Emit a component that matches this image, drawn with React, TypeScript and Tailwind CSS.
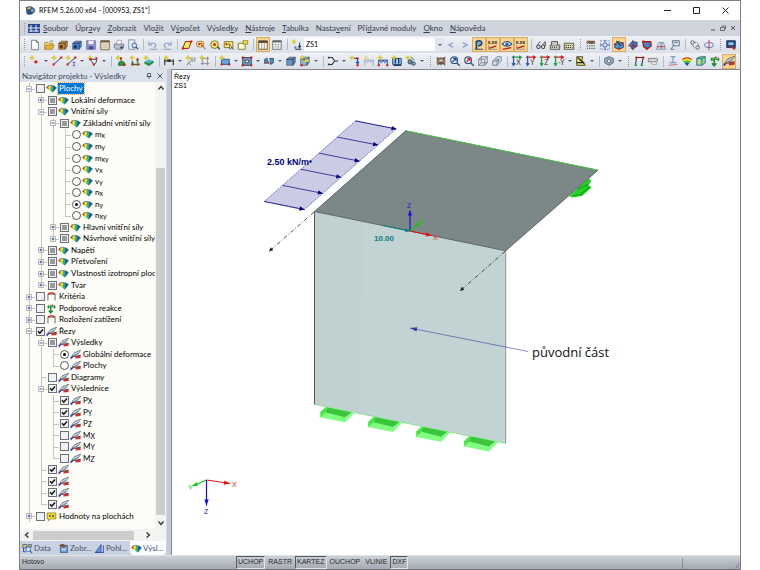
import { useEffect, useRef, type ReactNode } from "react";

const spark = <path d="M3.5 .5l.8 1.9 2 .8-2 .8-.8 2-.8-2-2-.8 2-.8z" fill="#f3e21c" stroke="#b9a400" strokeWidth=".5" />;
const box = (c: string, d: string) => (
  <>
    <path d="M2 5l3-2.500h7v6L9.500 12H2z" fill={c} stroke="#333" strokeWidth=".6" />
    <path d="M2 5h7.500v7M9.500 5L12 2.500" fill="none" stroke={d} strokeWidth="1" />
  </>
);
const node = (x: number, y: number) => <rect x={x - 1.2} y={y - 1.2} width="2.4" height="2.4" fill="#d81414" />;
const axis = (letter: string, a: string, b: string) => (
  <>
    <path d="M1 2.500h11M9.500 .8L12 2.500 9.500 4.200" stroke={a} strokeWidth="1.500" fill="none" />
    <path d="M3 1v11M1.200 9.500L3 12l1.800-2.500" stroke={b} strokeWidth="1.500" fill="none" />
    <text x="6" y="12" fontSize="8" fill="#333">{letter}</text>
  </>
);
const lens = (c: string) => (
  <>
    <circle cx="6" cy="6" r="4" fill="#dcebfa" stroke="#35507f" strokeWidth="1.200" />
    <path d="M9 9l3.500 3.500" stroke="#35507f" strokeWidth="1.800" />
    <path d="M4 8l4-4M5 4h3.200v3" stroke={c} strokeWidth="1.400" fill="none" />
  </>
);
const frame = (c: string) => (
  <path d="M2 12V6l3 3 2-3 2 3 3-3v6M2 6h10" fill="none" stroke={c} strokeWidth="1.100" />
);

const icons: Record<string, ReactNode> = {
  fresh: <path d="M3 1.500h5.500L11 4v8.500H3zM8.500 1.500V4H11" fill="#fff" stroke="#555" strokeWidth=".8" />,
  open: (
    <>
      <path d="M2 12V4h4l1 1h4v2" fill="#f6dd7c" stroke="#9a7410" strokeWidth=".8" />
      <path d="M2 12l2-5h9l-2 5z" fill="#e5b637" stroke="#9a7410" strokeWidth=".8" />
      <path d="M8 3q2-2 4 0" fill="none" stroke="#456" strokeWidth=".8" />
    </>
  ),
  brown: <>{box("#c58a3c", "#5f3a0c")}<circle cx="5" cy="9" r="2" fill="#553209" /></>,
  blue: <>{box("#4b83cf", "#173a78")}<circle cx="5" cy="9" r="2" fill="#12336d" /></>,
  save: (
    <>
      <path d="M2 2h10v10H2z" fill="#8b90d8" stroke="#555a9c" strokeWidth=".8" />
      <path d="M4 2h6v4H4z" fill="#eef" /><path d="M4.500 8.500h5V12h-5z" fill="#444a80" />
    </>
  ),
  panel: <><path d="M2 2h10v10.500H2z" fill="#e9e2cd" stroke="#6b5940" /><path d="M2 3h10" stroke="#6b5940" strokeWidth="2" /><path d="M4 6h6M4 8h6M4 10h6" stroke="#bbb29b" strokeWidth=".8" /></>,
  print: <><path d="M4 6L5 1.500h5L9.500 6" fill="#fff" stroke="#778" strokeWidth=".7" /><path d="M1.500 6h11v4l-2 2h-7l-2-2z" fill="#b6bfd0" stroke="#56607a" strokeWidth=".8" /><circle cx="10" cy="10" r="1.500" fill="#444" /></>,
  preview: <><path d="M2 1h7v11H2z" fill="#e8f0fa" stroke="#5d7290" strokeWidth=".8" /><circle cx="8.500" cy="7.500" r="2.800" fill="#cfe2f6" stroke="#35507f" /><path d="M10.500 9.500L13 12" stroke="#35507f" strokeWidth="1.500" /></>,
  undo: <path d="M2 3v4h4M2 7q4-4 8-1 1 3-2 4M3 12h9" fill="none" stroke="#8ba0c0" strokeWidth="1.200" />,
  redo: <path d="M12 3v4H8M12 7Q8 3 4 6q-1 3 2 4M3 12h9" fill="none" stroke="#8ba0c0" strokeWidth="1.200" />,
  plane: <><path d="M2 11L5 3h7L9 11z" fill="#f7ee58" stroke="#a01010" strokeWidth="1.100" />{node(2, 11)}{node(12, 3)}</>,
  ring: <><ellipse cx="6" cy="6" rx="4.500" ry="3.500" fill="#fff7a0" stroke="#9a6a14" /><path d="M8 7l4 5M5 5h3v3" stroke="#b51515" fill="none" />{node(5, 6)}</>,
  target: <><circle cx="6.500" cy="6.500" r="4.500" fill="#f8ef74" stroke="#6b6112" /><circle cx="6.500" cy="6.500" r="1.800" fill="#d22" /><path d="M10 9l2.500 3" stroke="#333" strokeWidth="1.400" /></>,
  note: <><path d="M1.500 3h10v7h-10z" fill="#f6ef6a" stroke="#77701a" /><path d="M7 5l1 7 1.500-2 2.500 2z" fill="#fff" stroke="#222" strokeWidth=".7" />{node(4, 6)}</>,
  sheet: <><path d="M1.500 5h8v7h-8z" fill="#fffbd0" stroke="#77701a" /><path d="M7 2h5.500v4H7z" fill="#f1e13c" stroke="#77701a" strokeWidth=".8" /></>,
  tableA: <><path d="M2 2h10v10H2z" fill="#fff" stroke="#5a4a33" /><path d="M2 3.500h10" stroke="#5a4a33" strokeWidth="2.400" /><path d="M5.500 4v8M8.500 4v8" stroke="#998a70" /></>,
  tableB: <><path d="M2 2h10v10H2z" fill="#fff" stroke="#666" /><path d="M2 3h10" stroke="#666" strokeWidth="2" /><path d="M2 6.500h10M2 9.300h10M5.500 4v8M8.500 4v8" stroke="#a9a9a9" strokeWidth=".8" /></>,
  load: <>{spark}<path d="M5 12h7M10 4v6M8.500 8L10 10.500 11.500 8" fill="none" stroke="#30405f" strokeWidth="1.200" /><circle cx="5" cy="10" r="1.500" fill="#73849d" /></>,
  prev: <path d="M9.500 4.500L4.500 7l5 2.500" fill="none" stroke="#7f97c9" strokeWidth="1.300" />,
  next: <path d="M4.500 4.500L9.500 7l-5 2.500" fill="none" stroke="#7f97c9" strokeWidth="1.300" />,
  results: <><path d="M4 12V3q5-2 6 1t-4 4" fill="none" stroke="#143d77" strokeWidth="2" /><circle cx="7" cy="5" r="2" fill="#6aaad9" /><path d="M2 12h10" stroke="#143d77" /></>,
  values: <><text x="1" y="6" fontSize="6" fontWeight="bold" fill="#222">x.xx</text><path d="M2 11l9-3" stroke="#c81616" strokeWidth="1.500" /><path d="M2 7v5h10" stroke="#888" fill="none" /></>,
  eye: <><path d="M1.500 6q5.500-6 11 0-5.500 5-11 0z" fill="#fff" stroke="#123b7c" strokeWidth="1.200" /><circle cx="7" cy="6" r="2" fill="#1c62bb" /><path d="M2 12l10-2" stroke="#c81616" strokeWidth="1.500" /></>,
  glasses: <><circle cx="4" cy="9" r="2" fill="none" stroke="#444" strokeWidth="1.200" /><circle cx="9.500" cy="9" r="2" fill="none" stroke="#444" strokeWidth="1.200" /><path d="M3 7l3-4M9 7l3-4M12 3v5" stroke="#444" /></>,
  calc: <><path d="M1.500 7h11v5h-11z" fill="#dedfcf" stroke="#444" /><path d="M3 7V3h7v4" fill="#c9cdb4" stroke="#444" /><path d="M3 9.500h8" stroke="#333" strokeDasharray="1.500 1" strokeWidth="1.400" /></>,
  calc2: <><path d="M1.500 5h11v7h-11z" fill="#e6e4ac" stroke="#444" /><path d="M3 7.500h8M3 10h8" stroke="#333" strokeDasharray="1.500 1" strokeWidth="1.200" /></>,
  shade: <><path d="M2 5h10M2 8h10M2 11h10" stroke="#666" strokeDasharray="1.500 1.200" strokeWidth="1.400" /><path d="M2 2h9l1 2-4 2-6-2z" fill="#7a5b43" /></>,
  snap: <><path d="M2 2h10v10H2z" fill="none" stroke="#6276b4" strokeDasharray="1.500 1.500" /><circle cx="7" cy="7" r="2.500" fill="#dbe4ff" stroke="#3752a8" /><path d="M7 1v3M7 10v3M1 7h3M10 7h3" stroke="#3752a8" /></>,
  solidA: <><path d="M2 6l4-3 6 2v5l-5 2-5-2z" fill="#3e9be0" stroke="#12406f" />{node(3, 6)}{node(11, 5)}{node(7, 11)}<path d="M4 2l5 6" stroke="#123" strokeWidth="1.200" /></>,
  solidB: <><path d="M3 6l3-3 6 1-1 5-5 3z" fill="#3e84d0" stroke="#12406f" /><path d="M7 1v12M1 8h12" stroke="#b41717" /></>,
  solidC: <><path d="M2 3h9l1 5-5 4-4-3z" fill="#3e84d0" stroke="#a31717" strokeWidth="1.400" />{node(3, 3)}{node(11, 4)}{node(7, 11)}</>,
  mirror: <><path d="M2 12L4 4h3v8zM12 12L10 4H8v8z" fill="#d8dfea" stroke="#6b7890" strokeWidth=".8" /><path d="M2 9h10" stroke="#b03333" /></>,
  view: <><path d="M4 2h8v6H5z" fill="#dfe4ee" stroke="#53627e" /><path d="M6 4h4M2 12l4-5M2 12h4" stroke="#53627e" fill="none" /></>,
  link: <><circle cx="4" cy="4" r="2" fill="none" stroke="#555" /><circle cx="10" cy="10" r="2" fill="none" stroke="#555" /><path d="M6 4q5-1 5 4M3 6l4 5" fill="none" stroke="#555" strokeDasharray="2 1" /></>,
  orbit: <><ellipse cx="7" cy="7" rx="5" ry="3" fill="none" stroke="#7088ca" strokeWidth="1.200" /><path d="M7 1v12" stroke="#cc2222" /></>,
  monitor: <><path d="M2 2h10v8H2z" fill="#274d84" stroke="#172e54" /><path d="M4 4h6v3H4z" fill="#9fc4ee" /><path d="M7 9l5 3" stroke="#c22" strokeWidth="1.800" /></>,
  point: <>{spark}<circle cx="8" cy="8" r="2" fill="#e11616" /></>,
  line: <>{spark}<path d="M3 11l9-8" stroke="#222" />{node(3, 11)}{node(12, 3)}</>,
  line2: <>{spark}<path d="M3 11l9-8" stroke="#222" /><path d="M9 8.500h3M10.500 8.500v4M9 12.500h3" stroke="#2b62b5" />{node(3, 11)}{node(12, 3)}</>,
  poly: <>{spark}<path d="M3 5h8v3l-3 4-2-4z" fill="none" stroke="#333" />{node(4, 5)}{node(11, 4)}{node(8, 11)}</>,
  support: <>{spark}<path d="M7 4v4M5 8h5l2 4H4z" fill="#26a543" stroke="#145d22" />{node(7, 4)}{node(11, 11)}</>,
  hinge: <>{spark}<path d="M3 11h9M4 7v4M10 5v4" stroke="#1a8a32" strokeWidth="1.800" />{node(4, 11)}{node(11, 11)}{node(10, 5)}</>,
  foundation: <>{spark}<path d="M2 8l5-3 5 2-5 3z" fill="#53b7d6" /><path d="M2 8l5 2 5-3v2l-5 3.500L2 10z" fill="#1b9d3a" stroke="#126626" strokeWidth=".5" /></>,
  dim: <>{spark}<path d="M2 12V5M12 12V5M2 7h10" stroke="#222" strokeWidth="1.200" /><path d="M5 5h4v3H5z" fill="#333" /></>,
  text: <>{spark}<path d="M2 12l4-5h6M4 9l3 3" fill="none" stroke="#777" /><text x="6" y="6" fontSize="5" fill="#444">0.5</text></>,
  grid: <><path d="M4 2v10M10 2v10M2 4h10M2 10h10" stroke="#888" />{spark}</>,
  surface: <><path d="M3 5h9v6H3z" fill="#6ba1dc" stroke="#274d84" />{spark}{node(12, 11)}{node(3, 11)}</>,
  hole: <><path d="M2 3h10v9H2z" fill="#6ba1dc" stroke="#333" /><path d="M5 6h4v3H5z" fill="#fff" stroke="#333" />{node(2, 3)}{node(12, 3)}{node(12, 12)}{node(2, 12)}</>,
  columns: <><path d="M2 5l3-1v5l-3 1zM8 4h4v5l-3 2z" fill="#4d9bcf" stroke="#174a6b" />{node(6, 9)}</>,
  solid: box("#6c94c3", "#17304f"),
  solidNew: <>{box("#8fb8c9", "#17304f")}{spark}<path d="M7 5h4v3H7z" fill="#e2d52c" />{node(3, 12)}</>,
  branch: <><path d="M2 3h4l3 4-3 4H2M9 7h4" fill="none" stroke="#333" strokeWidth="1.200" /><path d="M1 2h2v2H1zM1 10h2v2H1z" fill="#246" /></>,
  nodeLoad: <>{spark}<path d="M6 4h4v5M8.500 8l1.500 3 1.500-3" fill="none" stroke="#1c4fae" strokeWidth="1.300" />{node(10, 4)}{node(10, 12)}</>,
  lineLoadOff: <g opacity=".5">{frame("#5567aa")}{spark}</g>,
  lineLoad: <>{frame("#233f94")}{spark}{node(2, 12)}{node(12, 12)}</>,
  areaLoad: <><path d="M2 4h10v7H2z" fill="#9ec3e8" stroke="#123a6e" /><path d="M5 4v6M9 4v6M3 12h9" stroke="#123a6e" strokeWidth="1.500" />{spark}</>,
  freeLoad: <>{spark}<circle cx="6" cy="8" r="2.500" fill="#6a8cae" stroke="#234" /><circle cx="10" cy="10" r="2" fill="#8fb4d5" stroke="#234" /><path d="M7 2l4 4" stroke="#246" /></>,
  clip: <><path d="M2 3h10v8H2z" fill="#8a7763" /><path d="M2 3l10 9M12 2L3 12M7 3v9" stroke="#3d3027" /><path d="M5 5h4v3H5z" fill="#d6c6ae" /></>,
  zoomAll: lens("#17479f"),
  zoomBox: lens("#d41c1c"),
  cube: <path d="M2 5h7v7H2zM2 5l3-3h7v7l-3 3M9 5l3-3M5 2v7h7M5 9l-3 3" fill="none" stroke="#65708a" strokeWidth=".9" />,
  cubes: <path d="M2 7h5v5H2zM2 7l2-2h5v5l-2 2M5 4l2-2h5v5l-2 2M7 7l2-2" fill="#d5deee" stroke="#65708a" strokeWidth=".9" />,
  axX: axis("X", "#1fa43b", "#2e59b8"),
  axY: axis("Y", "#d41c1c", "#2e59b8"),
  axZ: axis("Z", "#d41c1c", "#1fa43b"),
  axMinus: axis("-Y", "#d41c1c", "#1fa43b"),
  plan: <><path d="M2 2h7l-1 5 4 5H2z" fill="#f2e948" stroke="#333" /><path d="M3 3l8 7M2 9h7" stroke="#222" strokeWidth="1.500" /></>,
  hex: <><path d="M2 4l5-2 5 2v5l-5 3-5-3z" fill="#a9b9cc" stroke="#43556d" /><circle cx="7" cy="7" r="2.300" fill="#dfe8f2" stroke="#43556d" /></>,
  portal: <><path d="M3 12L4 3h8l-2 9" fill="none" stroke="#333" strokeWidth="1.200" />{node(4, 3)}{node(12, 3)}<path d="M2 12h2.500M9 12h2.500" stroke="#1b9d3a" strokeWidth="1.500" /></>,
  tag: <><path d="M1.500 4h10l1 2-1 2h-10z" fill="#d5d5d5" stroke="#777" /><path d="M5 8h6v3H6z" fill="#eee" stroke="#888" strokeWidth=".7" /></>,
  member: <><path d="M4 2h6M7 2v7M3 9h8" stroke="#7286bd" strokeWidth="1.200" /><path d="M2 12l10-1" stroke="#c66" /></>,
  // colour bands of a result patch, red on the left rim to blue on the right
  fan: (
    <>
      <path d="M.5 6Q2 3 6 3q4.500-.2 7.500 3.200L8.500 12Q5 9 .5 6z" fill="#2fc24c" />
      <path d="M.5 6Q1.500 3.500 4 3.100L3.500 8.200Q2 7 .5 6z" fill="#ea3f22" />
      <path d="M3.500 3.300Q5 2.800 6.500 3L6 6.500l-.5 3.200-2-1.500L3 5.500z" fill="#f7e320" />
      <path d="M9 3.500q2.500 .7 4.500 2.700L8.500 12z" fill="#2256d2" />
      <path d="M.5 6Q2 3 6 3q4.500-.2 7.500 3.200" fill="none" stroke="#2a52a8" strokeWidth=".6" />
    </>
  ),
  fanBar: (
    <>
      <path d="M1 5q6-5 12 0L7 12.500z" fill="#c81414" />
      <path d="M1.500 5.500q5.500-3.500 11 0L7 12.500z" fill="#f8dd16" />
      <path d="M3 7.500q4-2.200 8 0l-4 5z" fill="#2cc846" />
      <path d="M4.500 9.500q2.500-1.200 5 0l-2.500 3z" fill="#1647d1" />
    </>
  ),
  iso: <><path d="M2 4l4-2h6v7l-4 3H2z" fill="#86d3c0" stroke="#2c7161" /><path d="M2 4h6l4-2M8 4v8" stroke="#2c7161" fill="none" /><circle cx="5" cy="8" r="1.800" fill="#f5d83a" /></>,
  reaction: (
    <>
      <path d="M6 12V3M3.500 9.500L6 12.500l2.500-3" fill="none" stroke="#178e2b" strokeWidth="1.800" />
      <path d="M2 5h10M2 5l2-2M2 5l2 2M12 5l-2-2M12 5l-2 2" stroke="#178e2b" strokeWidth="1.300" />
      <circle cx="8" cy="3" r="1.200" fill="#a33" />
    </>
  ),
  section: (
    <>
      <path d="M7 9.500L13.500 8v3.500L7 12.200z" fill="#dd2a2a" />
      <path d="M2 9.800L8 9l5.500-1.200" stroke="#3a3030" strokeWidth="1.100" fill="none" />
      <path d="M2.500 8.500L6 4.500 13.500 1.500 10 6.500 5 8.800z" fill="#9fb0c8" stroke="#3c485b" strokeWidth=".8" />
      <path d="M4 7.500l8-4.500" stroke="#e9eef5" strokeWidth=".9" />
      <path d="M.5 9.500l3.500 1-3 2.800z" fill="#1b30c8" />
    </>
  ),
  frameRed: <><path d="M2.500 12V4h9v8" fill="none" stroke="#555" strokeWidth="1.100" /><path d="M2.500 4q4.500-3 9 0" fill="none" stroke="#d02020" strokeWidth="1.600" /></>,
  comment: <><path d="M1.500 2.500h11v7.500H6l-3 2.500V10H1.500z" fill="#efe03c" stroke="#8a7d12" /><path d="M4 5l2 2.500M6 5L4 7.500M8 5l2 2.500M10 5L8 7.500" stroke="#333" strokeWidth=".9" /></>,
  data: <><path d="M1 2h5v4H1zM8 2h4v3H8z" fill="#f4c64b" stroke="#2d5aa5" /><circle cx="8" cy="8" r="3" fill="#dbe9f8" stroke="#2d5aa5" /><path d="M10 10l3 3M2 6v5h3" stroke="#2d5aa5" strokeWidth="1.300" fill="none" /></>,
  display: <><path d="M3 3h9v9H3z" fill="#7ba8df" stroke="#2b5795" /><path d="M1 3l5-2 5 3-4 2z" fill="#7b5136" /><path d="M5 8h5" stroke="#fff" /></>,
  looks: <><path d="M2 12L9 2v10z" fill="#6f9be0" stroke="#22489a" /><path d="M1 12h12M12 3v9" stroke="#22489a" /></>,
  logo: <><path d="M1 3q6-3 9 0v8q-4 3-8 0z" fill="#31527c" /><path d="M2 4q4-2 7 0-4 3-7 0z" fill="#d9c33a" /><circle cx="9.500" cy="7" r="3" fill="#6f9ace" stroke="#23354f" /></>,
};

function Icon({ name, className = "size-[12px]" }: { name: string; className?: string }) {
  return (
    <svg viewBox="0 0 14 14" className={`shrink-0 ${className}`} aria-hidden="true">
      {icons[name]}
    </svg>
  );
}

// "|" separator, ":" grip, "v" drop-down arrow, "*" prefix = switched on
const topTools =
  "fresh open brown blue save panel print preview | undo redo | plane ring target note sheet | *tableA tableB | load";
const topTools2 =
  "prev next *results *values *eye *values | glasses calc calc2 : shade snap *solidA solidB solidC mirror view | link orbit : monitor";
const lowTools =
  "point v line line2 v poly v | support hinge foundation | dim v text grid | surface v hole v columns v solid solidNew v | branch v nodeLoad lineLoadOff lineLoad areaLoad freeLoad v : clip zoomAll zoomBox cube cubes | axX axY axZ axMinus v plan v | hex v : portal tag | member fanBar iso reaction *section";

function Grip() {
  return (
    <span className="flex w-2 shrink-0 justify-center">
      <span className="h-[11px] border-l border-dotted border-[#8f98a9]" />
    </span>
  );
}

function DropArrow() {
  return (
    <svg viewBox="0 0 4 2" className="h-[2px] w-1">
      <path d="M0 0h4L2 2z" fill="#5a5f6b" />
    </svg>
  );
}

function Tools({ items }: { items: string }) {
  return (
    <>
      {items.split(" ").map((item, i) => {
        if (item === "|") {
          return (
            <span key={i} className="flex w-[6px] shrink-0 justify-center">
              <span className="h-[11px] w-px bg-[#b3bac8]" />
            </span>
          );
        }
        if (item === ":") return <Grip key={i} />;
        if (item === "v") {
          return (
            <button key={i} aria-label="Další" className="flex h-[14px] w-2 shrink-0 items-center justify-center">
              <DropArrow />
            </button>
          );
        }
        const active = item[0] === "*";
        const name = active ? item.slice(1) : item;
        return (
          <button
            key={i}
            aria-label={name}
            className={`flex h-[15px] w-[14px] shrink-0 items-center justify-center ${
              active ? "border border-[#d9aa62] bg-[#fbd592]" : ""
            }`}
          >
            <Icon name={name} />
          </button>
        );
      })}
    </>
  );
}

const menu = [
  ["", "S", "oubor"], ["Úpr", "a", "vy"], ["", "Z", "obrazit"], ["Vlo", "ž", "it"], ["V", "ý", "počet"],
  ["Výsled", "k", "y"], ["", "N", "ástroje"], ["", "T", "abulka"], ["Nasta", "v", "ení"],
  ["Pří", "d", "avné moduly"], ["", "O", "kno"], ["", "N", "ápověda"],
];

type Control = "off" | "on" | "mixed" | "radio" | "radioOn";
// guides: "|" line of an ancestor, "." empty, "t" branch, "l" last branch
type Row = [guides: string, expander: "+" | "-" | "", control: Control, icon: string, label: string, sub?: string];

const rows: Row[] = [
  ["t", "-", "off", "fan", "Plochy"],
  ["|t", "+", "mixed", "fan", "Lokální deformace"],
  ["|t", "-", "mixed", "fan", "Vnitřní síly"],
  ["||t", "-", "mixed", "fan", "Základní vnitřní síly"],
  ["|||t", "", "radio", "fan", "m", "x"],
  ["|||t", "", "radio", "fan", "m", "y"],
  ["|||t", "", "radio", "fan", "m", "xy"],
  ["|||t", "", "radio", "fan", "v", "x"],
  ["|||t", "", "radio", "fan", "v", "y"],
  ["|||t", "", "radio", "fan", "n", "x"],
  ["|||t", "", "radioOn", "fan", "n", "y"],
  ["|||l", "", "radio", "fan", "n", "xy"],
  ["||t", "+", "mixed", "fan", "Hlavní vnitřní síly"],
  ["||l", "+", "mixed", "fan", "Návrhové vnitřní síly"],
  ["|t", "+", "mixed", "fan", "Napětí"],
  ["|t", "+", "mixed", "fan", "Přetvoření"],
  ["|t", "+", "mixed", "fan", "Vlastnosti izotropní ploch"],
  ["|l", "+", "mixed", "fan", "Tvar"],
  ["t", "+", "off", "frameRed", "Kritéria"],
  ["t", "+", "off", "reaction", "Podporové reakce"],
  ["t", "+", "off", "frameRed", "Rozložení zatížení"],
  ["t", "-", "on", "section", "Řezy"],
  ["|t", "-", "mixed", "section", "Výsledky"],
  ["||t", "", "radioOn", "section", "Globální deformace"],
  ["||l", "", "radio", "section", "Plochy"],
  ["|t", "", "off", "section", "Diagramy"],
  ["|t", "-", "on", "section", "Výslednice"],
  ["||t", "", "on", "section", "P", "X"],
  ["||t", "", "on", "section", "P", "Y"],
  ["||t", "", "on", "section", "P", "Z"],
  ["||t", "", "off", "section", "M", "X"],
  ["||t", "", "off", "section", "M", "Y"],
  ["||l", "", "off", "section", "M", "Z"],
  ["|t", "", "on", "section", ""],
  ["|t", "", "on", "section", ""],
  ["|t", "", "on", "section", ""],
  ["|l", "", "on", "section", ""],
  ["t", "+", "off", "comment", "Hodnoty na plochách"],
];

function Tick({ control, group, name }: { control: Control; group: string; name: string }) {
  const ref = useRef<HTMLInputElement>(null);
  useEffect(() => {
    if (ref.current && control === "mixed") ref.current.indeterminate = true;
  }, [control]);

  if (control === "radio" || control === "radioOn") {
    return (
      <span className="grid shrink-0 place-items-center">
        <input
          type="radio"
          name={group}
          aria-label={name}
          defaultChecked={control === "radioOn"}
          className="peer col-start-1 row-start-1 size-[9px] appearance-none rounded-full border border-[#555] bg-white"
        />
        <span className="invisible col-start-1 row-start-1 size-[3px] rounded-full bg-black peer-checked:visible" />
      </span>
    );
  }
  return (
    <span className="grid shrink-0 place-items-center">
      <input
        ref={ref}
        type="checkbox"
        aria-label={name}
        defaultChecked={control === "on"}
        className="peer col-start-1 row-start-1 size-[9px] appearance-none border border-[#6c7078] bg-[#f0f1f4]"
      />
      <svg viewBox="0 0 7 7" className="pointer-events-none invisible col-start-1 row-start-1 size-[7px] peer-checked:visible">
        <path d="M1 3.200L2.800 5.200 6 1.500" fill="none" stroke="#111" strokeWidth="1.500" />
      </svg>
      <span className="pointer-events-none invisible col-start-1 row-start-1 size-[5px] bg-[#9a9a9a] peer-indeterminate:visible" />
    </span>
  );
}

function Guide({ kind, expander }: { kind: string; expander: string }) {
  return (
    <span className="relative flex w-3 shrink-0 items-center justify-center">
      {kind !== "." && (
        <span className={`absolute left-[6px] top-0 w-px bg-[#c4c4c0] ${kind === "l" ? "h-1/2" : "h-full"}`} />
      )}
      {(kind === "t" || kind === "l") && <span className="absolute left-[6px] right-0 top-1/2 h-px bg-[#c4c4c0]" />}
      {expander && (
        <button
          aria-label={expander === "+" ? "Rozbalit" : "Sbalit"}
          className="relative flex size-[6px] items-center justify-center"
        >
          <svg viewBox="0 0 6 6" className="size-[6px]">
            <path d="M.5 .5h5v5h-5z" fill="#fff" stroke="#a5a5a5" strokeWidth=".8" />
            <path d={expander === "+" ? "M1.500 3h3M3 1.500v3" : "M1.500 3h3"} stroke="#274a9c" strokeWidth=".9" />
          </svg>
        </button>
      )}
    </span>
  );
}

function TreeRow({ row }: { row: Row }) {
  const [guides, expander, control, icon, label, sub] = row;
  const last = guides.length - 1;
  return (
    <div className="flex min-h-0 flex-1 items-stretch">
      {guides.split("").map((kind, i) => (
        <Guide key={i} kind={kind} expander={i === last ? expander : ""} />
      ))}
      <label className="flex items-center gap-px whitespace-nowrap pl-px">
        <Tick control={control} group={`g${guides.length}${icon}`} name={`${label || "Řez"}${sub ?? ""}`} />
        <Icon name={icon} className="size-[11px]" />
        {label && (
          <span
            className={`px-px leading-[11px] ${
              label === "Plochy" && last === 0 ? "bg-[#0078d7] text-white outline-1 outline-dotted outline-[#e0a060]" : ""
            }`}
          >
            {label}
            {sub && <span className="relative top-px text-[7px]">{sub}</span>}
          </span>
        )}
      </label>
    </div>
  );
}

function Chevron({ d }: { d: string }) {
  return (
    <svg viewBox="0 0 6 6" className="size-[6px]">
      <path d={d} fill="none" stroke="#333" strokeWidth="1.300" />
    </svg>
  );
}

const tabs = [
  ["data", "Data"],
  ["display", "Zobr..."],
  ["looks", "Pohl..."],
  ["fan", "Výsl..."],
];

function Navigator() {
  return (
    <aside className="flex w-[147px] shrink-0 flex-col bg-[#d3dbe8]">
      <header className="flex h-[13px] shrink-0 items-center bg-[#dce2ec] pl-[2px] pr-1 text-[8px] text-[#3b475c]">
        <h2 className="flex-1 whitespace-nowrap">Navigátor projektu - Výsledky</h2>
        <button aria-label="Připnout" className="mr-[5px]">
          <svg viewBox="0 0 6 6" className="size-[6px]"><path d="M1.500 .5h3v3h-3zM.5 3.500h5M3 3.500V6" fill="none" stroke="#3b475c" strokeWidth=".8" /></svg>
        </button>
        <button aria-label="Zavřít">
          <svg viewBox="0 0 6 6" className="size-[6px]"><path d="M.5 .5l5 5M5.500 .5l-5 5" stroke="#3b475c" strokeWidth=".9" /></svg>
        </button>
      </header>
      <div className="flex min-h-0 flex-1">
        <div className="flex min-w-0 flex-1 flex-col overflow-hidden bg-[#fdfcf6] pb-[7px] pl-[3px] pt-px text-[8px]">
          {rows.map((row, i) => (
            <TreeRow key={i} row={row} />
          ))}
        </div>
        <div className="mr-px flex w-[11px] flex-col items-center bg-[#f3f3f1] py-[3px]">
          <Chevron d="M.5 4.500L3 1.500l2.500 3" />
          <div className="mb-[5px] mt-[77px] w-[9px] flex-1 bg-[#cdcdcd]" />
          <Chevron d="M.5 1.500L3 4.500l2.500-3" />
        </div>
      </div>
      <div className="mr-px flex h-3 shrink-0 items-center bg-[#f3f3f1] px-1">
        <Chevron d="M4.500 .5L1.500 3l3 2.500" />
        <div className="ml-[3px] mr-[11px] h-[9px] flex-1 bg-[#cdcdcd]" />
        <Chevron d="M1.500 .5l3 2.500-3 2.500" />
        <div className="w-[11px]" />
      </div>
      <nav className="flex h-[14px] shrink-0 items-stretch bg-[#c9d2e1] pl-[2px] text-[8px] text-[#44546d]">
        {tabs.map(([icon, label]) => (
          <button
            key={label}
            className={`flex w-9 items-center gap-px whitespace-nowrap ${
              label === "Výsl..." ? "rounded-b-sm bg-[#fbfcfe] pl-px" : ""
            }`}
          >
            <Icon name={icon} className="size-[11px]" />
            {label}
          </button>
        ))}
      </nav>
    </aside>
  );
}

function Arrow({ x1, y1, x2, y2, color, size = 4, dash, width = 1 }: {
  x1: number; y1: number; x2: number; y2: number; color: string; size?: number; dash?: string; width?: number;
}) {
  const angle = (Math.atan2(y2 - y1, x2 - x1) * 180) / Math.PI;
  const half = Math.min(size / 2, 2.2);
  return (
    <g>
      <path d={`M${x1} ${y1}L${x2} ${y2}`} stroke={color} strokeWidth={width} strokeDasharray={dash} />
      <path d={`M0 0L${-size} ${-half}V${half}z`} fill={color} transform={`translate(${x2} ${y2}) rotate(${angle})`} />
    </g>
  );
}

function Scene() {
  return (
    <svg viewBox="172 71 568 484" className="size-full" role="img" aria-label="Model">
      {/* load on the free edge */}
      <path d="M355.700 121.300L396 129.500 304 210.300 264.300 202z" fill="#cbcbe6" stroke="#5555a5" strokeWidth=".8" strokeDasharray="2 1" />
      {[0, 1, 2, 3, 4, 5].map((i) => (
        <Arrow
          key={i}
          x1={264.3 + i * 18.3}
          y1={202 - i * 16.1}
          x2={304.5 + i * 18.4}
          y2={210 - i * 16.1}
          color="#00007c"
          width={0.7}
          size={5}
        />
      ))}
      <text x="267" y="165" fontSize="9" fontWeight="bold" fill="#000080">2.50 kN/m</text>
      <circle cx="310.500" cy="162" r="1.200" fill="#000080" />

      {/* roof support */}
      <path d="M569.500 196.500l2.500 1.500 10-1.500 9.500-8.500-3-2 3-5-3-2z" fill="#22d422" />
      <path d="M573 196l8-1 9-8M577 190l11-5" stroke="#10a510" strokeWidth="1.200" fill="none" />

      {/* wall and roof */}
      <path d="M314.500 212L505.700 251.300V444L314.500 405z" fill="#bfd2d0" />
      <path d="M364 222.200L505.700 251.300V444L359 414z" fill="#c1d3d2" />
      <path d="M314.500 212V405" stroke="#555b5b" />
      <path d="M505.700 251.300V444" stroke="#8f9998" />
      <path d="M314.500 405L505.700 444" stroke="#5fe45f" strokeDasharray="2 1" strokeWidth=".8" />
      <path d="M405.700 131.300L598 170.700 505.700 251.300 314.500 212z" fill="#7c8887" stroke="#4d5655" strokeWidth=".8" />
      <path d="M405.700 131.300L598 170.700" stroke="#4ac94a" />
      <circle cx="314.500" cy="212" r=".8" fill="#e05050" />
      <circle cx="505.700" cy="251.300" r=".8" fill="#e05050" />

      {/* base supports */}
      {[0, 1, 2, 3].map((i) => (
        <g key={i} transform={`translate(${i * 47.9} ${i * 9.7})`}>
          <path d="M320.500 412.500l5.500-5 28.500 5.800-9.500 9.500-24.500-4.800z" fill="#80ff80" />
          <path d="M325 412.700l2.500-4.700 24 4.800-6.500 5z" fill="#3cc43c" />
          <path d="M320.500 412.500l5.500-5 1 .5-2 5.500-4.500 4.500z" fill="#45e645" />
        </g>
      ))}

      <Arrow x1={314} y1={212.500} x2={269} y2={252} color="#222" width={0.8} dash="4 2 1 2" />
      <Arrow x1={505} y1={252} x2={460} y2={291.500} color="#222" width={0.8} dash="4 2 1 2" />

      {/* local axes */}
      <Arrow x1={383} y1={226} x2={409.500} y2={231.500} color="#008080" />
      <Arrow x1={410} y1={231.500} x2={410} y2={211} color="#1414dc" size={5} width={1.200} />
      <Arrow x1={410} y1={231.500} x2={420.500} y2={223} color="#10c810" width={1.200} />
      <Arrow x1={410} y1={231.500} x2={431} y2={236} color="#f01010" size={5} width={1.200} />
      <text x="407" y="208" fontSize="7" fill="#2020d0">Z</text>
      <text x="420" y="224" fontSize="7" fill="#10c810">Y</text>
      <text x="433" y="240" fontSize="7" fill="#f02020">X</text>
      <text x="374" y="241" fontSize="8" fontWeight="bold" fill="#0a8080">10.00</text>

      <Arrow x1={528} y1={352} x2={410} y2={328.500} color="#3c3ca0" width={0.6} size={7} />
      <text x="532" y="357" fontSize="13" fill="#111" className="font-['Open_Sans','Noto_Sans',sans-serif]">původní část</text>

      {/* global axes */}
      <Arrow x1={206.500} y1={480.500} x2={230} y2={484} color="#f01010" size={6} width={1.200} />
      <Arrow x1={206.500} y1={480.500} x2={192.500} y2={486.500} color="#10c810" size={5} width={1.200} />
      <Arrow x1={206.500} y1={480.500} x2={206.500} y2={506} color="#1010e0" size={6} width={1.200} />
      <text x="232" y="487" fontSize="7" fill="#f02020">X</text>
      <text x="188" y="490" fontSize="7" fill="#10c810">Y</text>
      <text x="204" y="514" fontSize="7" fill="#2020d0">Z</text>
    </svg>
  );
}

const modes: [string, boolean][] = [
  ["UCHOP", true],
  ["RASTR", false],
  ["KARTEZ", true],
  ["OUCHOP", false],
  ["VLINIE", false],
  ["DXF", true],
];

export default function App() {
  return (
    <div className="h-screen bg-white px-[19px] font-[Lato,'Noto_Sans',sans-serif] text-black">
      <div className="flex h-full flex-col overflow-hidden border border-b-0 border-[#7d7f84] bg-[#d0d4dd]">
        <header className="flex h-[19px] shrink-0 items-center bg-white pl-[5px] pr-[11px]">
          <Icon name="logo" className="size-[11px]" />
          <h1 className="ml-[3px] flex-1 whitespace-nowrap text-[7px]">RFEM 5.26.00 x64 - [000953, ZS1*]</h1>
          <div className="flex gap-[22px]">
            <button aria-label="Minimalizovat"><svg viewBox="0 0 7 7" className="size-[7px]"><path d="M0 3.500h7" stroke="#222" /></svg></button>
            <button aria-label="Maximalizovat"><svg viewBox="0 0 7 7" className="size-[7px]"><path d="M.5 .5h6v6h-6z" fill="none" stroke="#222" /></svg></button>
            <button aria-label="Zavřít okno"><svg viewBox="0 0 7 7" className="size-[7px]"><path d="M.5 .5l6 6M6.500 .5l-6 6" stroke="#222" /></svg></button>
          </div>
        </header>

        <nav className="flex h-4 shrink-0 items-center pr-1 text-[8px] text-[#323c4c]">
          <Grip />
          <svg viewBox="0 0 12 9" className="mr-[3px] h-[9px] w-3 shrink-0">
            <path d="M0 0h12v9H0z" fill="#25448c" />
            <path d="M0 4h12M3 1v7M8 1v7M1 7h10" stroke="#e4ebfa" />
          </svg>
          <div className="flex flex-1 gap-[7px]">
            {menu.map(([a, key, b]) => (
              <button key={a + key + b} className="whitespace-nowrap">
                {a}<u>{key}</u>{b}
              </button>
            ))}
          </div>
          <div className="flex gap-1">
            <button aria-label="Minimalizovat model"><svg viewBox="0 0 6 6" className="size-[6px]"><path d="M1 5h4" stroke="#555" /></svg></button>
            <button aria-label="Obnovit model"><svg viewBox="0 0 6 6" className="size-[6px]"><path d="M.5 2.500h4v3h-4zM1.500 1h4v3" fill="none" stroke="#555" strokeWidth=".8" /></svg></button>
            <button aria-label="Zavřít model"><svg viewBox="0 0 6 6" className="size-[6px]"><path d="M1 1l4 4M5 1L1 5" stroke="#555" /></svg></button>
          </div>
        </nav>

        <div className="flex h-[17px] shrink-0 items-center overflow-hidden bg-linear-to-b from-[#eff1f6] to-[#dadfe8]">
          <Grip />
          <Tools items={topTools} />
          <select
            aria-label="Zatěžovací stav"
            className="h-[13px] w-[131px] shrink-0 appearance-none bg-white pl-[2px] text-[7px] leading-[11px] text-black"
          >
            <option>ZS1</option>
          </select>
          <span className="flex h-[13px] w-[9px] shrink-0 items-center justify-center bg-[#e1e5ed]">
            <DropArrow />
          </span>
          <Tools items={topTools2} />
        </div>
        <div className="flex h-4 shrink-0 items-center overflow-hidden bg-linear-to-b from-[#eff1f6] to-[#dadfe8]">
          <Grip />
          <Tools items={lowTools} />
        </div>

        <main className="flex min-h-0 flex-1">
          <Navigator />
          <div className="w-1 shrink-0 bg-[#c3c9d5]" />
          <section className="relative min-w-0 flex-1 border-l border-t border-[#85888e] bg-white font-['Liberation_Sans',Arial,sans-serif]">
            <Scene />
            <p className="absolute left-[2px] top-[2px] text-[7px] leading-[9px]">
              Řezy<br />ZS1
            </p>
          </section>
        </main>

        <footer className="flex h-[15px] shrink-0 items-stretch border-b border-t border-b-[#74777d] border-t-[#dfe2e6] bg-linear-to-b from-[#cdd1d7] to-[#a3a9b2] font-['Liberation_Sans',Arial,sans-serif] text-[7px] text-[#26282c]">
          <p className="w-[216px] self-center pl-[2px]">Hotovo</p>
          {modes.map(([name, on]) => (
            <button
              key={name}
              className={`mr-px border px-px text-[7px] ${
                on ? "border-[#55585e] border-b-[#e2e5e9] border-r-[#e2e5e9]" : "border-transparent"
              }`}
            >
              {name}
            </button>
          ))}
          <div className="flex flex-1 items-end justify-end">
            <span className="mr-[50px] h-[11px] w-px bg-[#858b94]" />
            <svg viewBox="0 0 7 7" className="size-[7px]">
              <path d="M5.500 .5v6M3.500 3v4M1.500 5.500v1.500" stroke="#70757e" strokeDasharray="1 1" />
            </svg>
          </div>
        </footer>
      </div>
    </div>
  );
}
